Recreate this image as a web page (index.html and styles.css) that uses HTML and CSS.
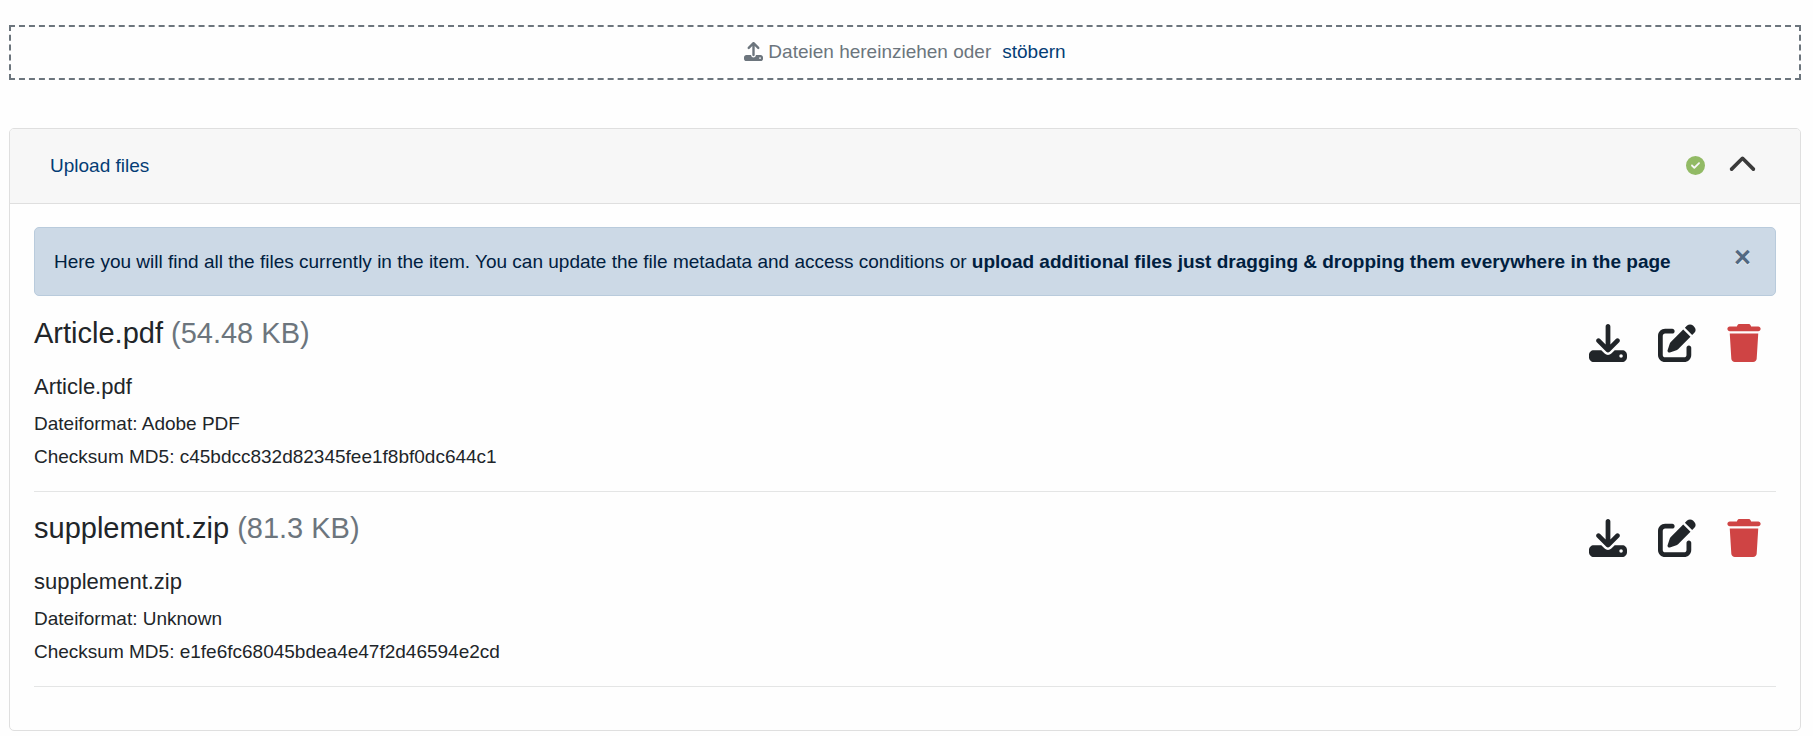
FILE: index.html
```html
<!DOCTYPE html>
<html lang="de">
<head>
    <meta charset="UTF-8">
    <meta name="viewport" content="width=device-width, initial-scale=1.0">
    <title>Upload files</title>
    <link rel="stylesheet" href="styles.css">
</head>
<body>

    <!-- Shared icons -->
    <svg class="icon-defs" aria-hidden="true">
        <symbol id="icon-download" viewBox="0 0 512 512">
            <path d="M288 32c0-17.7-14.3-32-32-32s-32 14.3-32 32V274.7l-73.4-73.4c-12.5-12.5-32.8-12.5-45.3 0s-12.5 32.8 0 45.3l128 128c12.5 12.5 32.8 12.5 45.3 0l128-128c12.5-12.5 12.5-32.8 0-45.3s-32.8-12.5-45.3 0L288 274.7V32zM64 352c-35.3 0-64 28.7-64 64v32c0 35.3 28.7 64 64 64H448c35.3 0 64-28.7 64-64V416c0-35.3-28.7-64-64-64H346.5l-45.3 45.3c-25 25-65.5 25-90.5 0L165.5 352H64zm368 56a24 24 0 1 1 0 48 24 24 0 1 1 0-48z"/>
        </symbol>
        <symbol id="icon-edit" viewBox="0 0 512 512">
            <path d="M471.6 21.7c-21.9-21.9-57.3-21.9-79.2 0L362.3 51.7l97.9 97.9 30.1-30.1c21.9-21.9 21.9-57.3 0-79.2L471.6 21.7zm-299.2 220c-6.1 6.1-10.8 13.6-13.5 21.9l-29.6 88.8c-2.9 8.6-.6 18.1 5.8 24.6s15.9 8.7 24.6 5.8l88.8-29.6c8.2-2.7 15.7-7.4 21.9-13.5L437.7 172.3 339.7 74.3 172.4 241.7zM96 64C43 64 0 107 0 160V416c0 53 43 96 96 96H352c53 0 96-43 96-96V320c0-17.7-14.3-32-32-32s-32 14.3-32 32v96c0 17.7-14.3 32-32 32H96c-17.7 0-32-14.3-32-32V160c0-17.7 14.3-32 32-32h96c17.7 0 32-14.3 32-32s-14.3-32-32-32H96z"/>
        </symbol>
        <symbol id="icon-trash" viewBox="0 0 448 512">
            <path d="M135.2 17.7L128 32H32C14.3 32 0 46.3 0 64S14.3 96 32 96H416c17.7 0 32-14.3 32-32s-14.3-32-32-32H320l-7.2-14.3C307.4 6.8 296.3 0 284.2 0H163.8c-12.1 0-23.2 6.8-28.6 17.7zM416 128H32L53.2 467c1.6 25.3 22.6 45 47.9 45H346.9c25.3 0 46.3-19.7 47.9-45L416 128z"/>
        </symbol>
    </svg>

    <!-- Drop zone -->
    <div class="drop-zone">
        <svg class="icon-upload" viewBox="0 0 512 512" aria-hidden="true">
            <path d="M288 109.3V352c0 17.7-14.3 32-32 32s-32-14.3-32-32V109.3l-73.4 73.4c-12.5 12.5-32.8 12.5-45.3 0s-12.5-32.8 0-45.3l128-128c12.5-12.5 32.8-12.5 45.3 0l128 128c12.5 12.5 12.5 32.8 0 45.3s-32.8 12.5-45.3 0L288 109.3zM64 352H192c0 35.3 28.7 64 64 64s64-28.7 64-64H448c35.3 0 64 28.7 64 64v32c0 35.3-28.7 64-64 64H64c-35.3 0-64-28.7-64-64V416c0-35.3 28.7-64 64-64zM432 456a24 24 0 1 0 0-48 24 24 0 1 0 0 48z"/>
        </svg>
        <span>Dateien hereinziehen oder</span>
        <a class="browse" href="#">stöbern</a>
    </div>

    <!-- Upload section -->
    <section class="card">
        <div class="card-header">
            <a class="card-title" href="#files">Upload files</a>
            <div class="card-status">
                <svg class="icon-valid" viewBox="0 0 512 512" aria-hidden="true">
                    <path d="M256 512A256 256 0 1 0 256 0a256 256 0 1 0 0 512zM369 209L241 337c-9.4 9.4-24.6 9.4-33.9 0l-64-64c-9.4-9.4-9.4-24.6 0-33.9s24.6-9.4 33.9 0l47 47L335 175c9.4-9.4 24.6-9.4 33.9 0s9.4 24.6 0 33.9z"/>
                </svg>
                <button class="btn" type="button" aria-label="Collapse">
                    <svg class="icon-chevron" viewBox="0 0 512 512" aria-hidden="true">
                        <path d="M233.4 105.4c12.5-12.5 32.8-12.5 45.3 0l192 192c12.5 12.5 12.5 32.8 0 45.3s-32.8 12.5-45.3 0L256 173.3 86.6 342.6c-12.5 12.5-32.8 12.5-45.3 0s-12.5-32.8 0-45.3l192-192z"/>
                    </svg>
                </button>
            </div>
        </div>

        <div class="card-body" id="files">
            <div class="alert">
                <p class="alert-text">Here you will find all the files currently in the item. You can update the file metadata and access conditions or <strong>upload additional files just dragging &amp; dropping them everywhere in the page</strong></p>
                <button class="btn close" type="button" aria-label="Close">×</button>
            </div>

            <div class="file">
                <div class="file-info">
                    <h3>Article.pdf <span class="file-size">(54.48 KB)</span></h3>
                    <h5>Article.pdf</h5>
                    <p>Dateiformat: Adobe PDF</p>
                    <p>Checksum MD5: c45bdcc832d82345fee1f8bf0dc644c1</p>
                </div>
                <div class="file-actions">
                    <a class="action" href="#" aria-label="Download"><svg class="icon-action"><use href="#icon-download"/></svg></a>
                    <button class="btn action" type="button" aria-label="Edit"><svg class="icon-action"><use href="#icon-edit"/></svg></button>
                    <button class="btn action delete" type="button" aria-label="Delete"><svg class="icon-action icon-trash"><use href="#icon-trash"/></svg></button>
                </div>
            </div>

            <div class="file">
                <div class="file-info">
                    <h3>supplement.zip <span class="file-size">(81.3 KB)</span></h3>
                    <h5>supplement.zip</h5>
                    <p>Dateiformat: Unknown</p>
                    <p>Checksum MD5: e1fe6fc68045bdea4e47f2d46594e2cd</p>
                </div>
                <div class="file-actions">
                    <a class="action" href="#" aria-label="Download"><svg class="icon-action"><use href="#icon-download"/></svg></a>
                    <button class="btn action" type="button" aria-label="Edit"><svg class="icon-action"><use href="#icon-edit"/></svg></button>
                    <button class="btn action delete" type="button" aria-label="Delete"><svg class="icon-action icon-trash"><use href="#icon-trash"/></svg></button>
                </div>
            </div>
        </div>
    </section>

</body>
</html>
```
FILE: styles.css
```css
* {
    box-sizing: border-box;
}
body {
    margin: 0;
    padding: 25px 12px 4px 9px;
    font-family: "Liberation Sans", Arial, sans-serif;
    font-size: 19px;
    line-height: 29px;
    color: #212529;
    background-color: #fefefe;
}
h3, h5, p {
    margin: 0;
    font-weight: normal;
}
a {
    color: #043d75;
    text-decoration: none;
}
svg {
    display: block;
    fill: currentColor;
}
.icon-defs {
    display: none;
}
.btn {
    padding: 0;
    border: none;
    background: none;
    font: inherit;
    color: inherit;
    cursor: pointer;
}
.drop-zone {
    display: flex;
    justify-content: center;
    align-items: center;
    gap: 5px;
    height: 55px;
    margin-bottom: 48px;
    padding-bottom: 3px;
    border: 2px dashed #6c757d;
    color: #6c757d;
}
.icon-upload {
    width: 19px;
    height: 19px;
}
.browse {
    margin-left: 6px;
}
.card {
    border: 1px solid #dfdfdf;
    border-radius: 5px;
    overflow: hidden;
}
.card-header {
    display: flex;
    justify-content: space-between;
    align-items: center;
    height: 75px;
    padding: 0 43px 2px 40px;
    border-bottom: 1px solid #dfdfdf;
    background-color: #f7f7f7;
}
.card-status {
    display: flex;
    align-items: center;
    gap: 23px;
}
.icon-valid {
    width: 19px;
    height: 19px;
    color: #92ba65;
}
.icon-chevron {
    width: 29px;
    height: 29px;
    color: #3b3b3b;
}
.card-body {
    padding: 23px 24px 43px;
}
.alert {
    display: flex;
    justify-content: space-between;
    align-items: flex-start;
    margin-bottom: 20px;
    padding: 19px 24px 19px 19px;
    border: 1px solid #b9cbdc;
    border-radius: 5px;
    background-color: #ccd9e6;
    color: #00203f;
}
.close {
    font-size: 29px;
    line-height: 20px;
    font-weight: bold;
    color: #00203f;
    text-shadow: 0 1px 0 #fff;
    opacity: 0.6;
}
.file {
    display: flex;
    justify-content: space-between;
    margin-bottom: 19px;
    padding-bottom: 16px;
    border-bottom: 1px solid #e4e5e5;
}
.file:last-child {
    margin-bottom: 0;
}
.file-info h3 {
    margin-bottom: 23px;
    font-size: 29px;
    line-height: 35px;
}
.file-info h5 {
    margin-bottom: 9px;
    font-size: 22px;
    line-height: 26px;
}
.file-info p {
    margin-bottom: 4px;
}
.file-size {
    color: #6c757d;
}
.file-actions {
    display: flex;
    align-items: flex-start;
    gap: 31px;
    padding: 8px 15px 0 0;
}
.action {
    color: #212529;
}
.icon-action {
    width: 38px;
    height: 38px;
}
.icon-trash {
    width: 34px;
}
.delete {
    color: #cf4444;
}
```
